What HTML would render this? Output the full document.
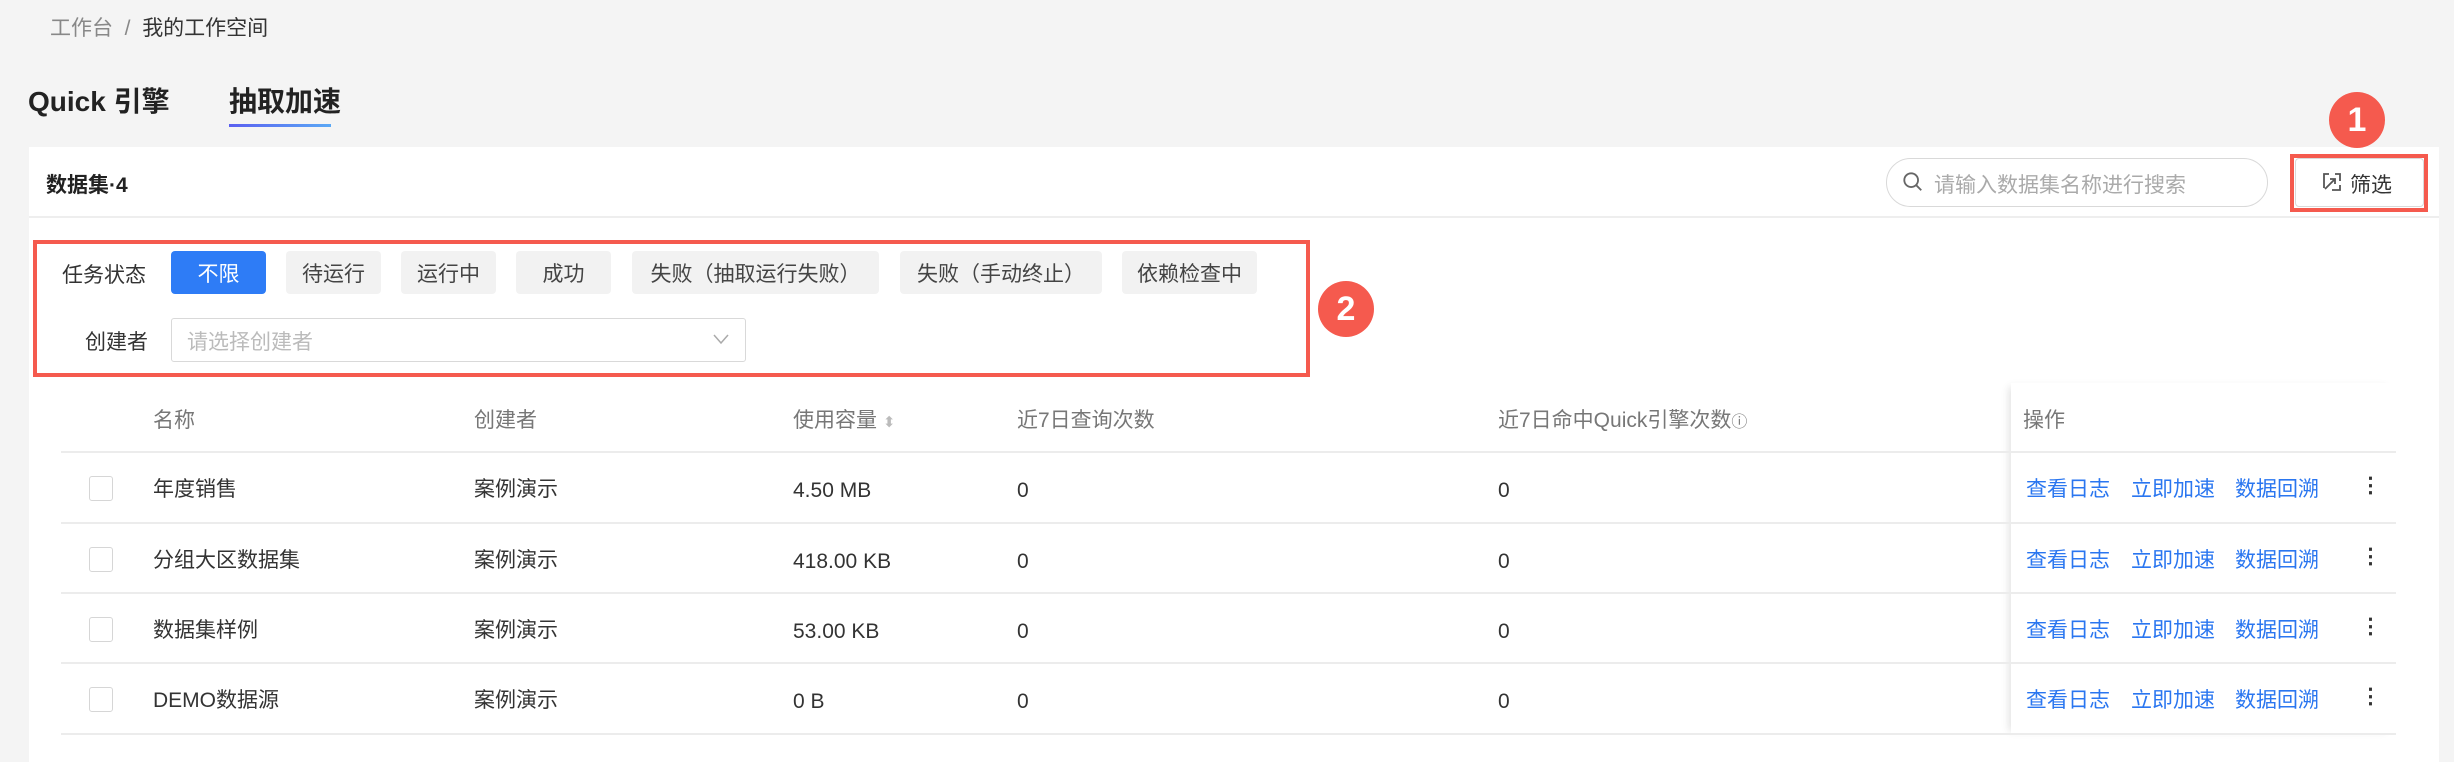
<!DOCTYPE html>
<html><head><meta charset="utf-8"><style>
*{box-sizing:border-box;margin:0;padding:0}
body{width:2454px;height:762px;background:#f4f4f4;font-family:"Liberation Sans","Noto Sans CJK SC",sans-serif;position:relative;overflow:hidden;color:#333}
.a{position:absolute;white-space:nowrap}
.chip{position:absolute;top:251px;height:43px;background:#f2f2f2;border-radius:4px;font-size:21px;color:#444;display:flex;align-items:center;justify-content:center}
.th{position:absolute;top:404px;font-size:21px;color:#777}
.td{position:absolute;font-size:21px;color:#333}
.ln{position:absolute;left:61px;width:2335px;height:2px;background:#ececec}
.lk{position:absolute;font-size:21px;color:#2a76f0}
.cb{position:absolute;left:89px;width:24px;height:25px;border:1px solid #d6d6d6;border-radius:3px;background:#fff}
.badge{position:absolute;width:56px;height:56px;border-radius:50%;background:#f55a4e;color:#fff;font-size:34px;font-weight:bold;display:flex;align-items:center;justify-content:center}
.l{margin-top:4px}
</style></head><body>
<div class="a" style="left:50px;top:12px;font-size:21px;color:#888">工作台 &nbsp;/&nbsp; <span style="color:#333">我的工作空间</span></div>
<div class="a" style="left:28px;top:80px;font-size:28px;color:#222;font-weight:bold">Quick 引擎</div>
<div class="a" style="left:229px;top:80px;font-size:28px;color:#222;font-weight:bold">抽取加速</div>
<div class="a" style="left:229px;top:124px;width:102px;height:3px;background:linear-gradient(90deg,#5a5ff0,#5aa8f5)"></div>
<div class="a" style="left:29px;top:147px;width:2410px;height:615px;background:#fff"></div>
<div class="a" style="left:46px;top:169px;font-size:21px;color:#222;font-weight:bold">数据集·4</div>
<div class="a" style="left:29px;top:216px;width:2410px;height:2px;background:#eee"></div>
<div class="a" style="left:1886px;top:158px;width:382px;height:49px;border:1px solid #d9d9d9;border-radius:25px"></div>
<svg class="a" style="left:1902px;top:171px" width="22" height="22" viewBox="0 0 24 24"><circle cx="10" cy="10" r="7.5" fill="none" stroke="#666" stroke-width="2"/><path d="M15.5 15.5L21 21" stroke="#666" stroke-width="2"/></svg>
<div class="a" style="left:1934px;top:169px;font-size:21px;color:#aaa">请输入数据集名称进行搜索</div>
<div class="a" style="left:2295px;top:158px;width:129px;height:49px;border:1px solid #d9d9d9;border-radius:4px"></div>
<svg class="a" style="left:2321px;top:171px" width="22" height="22" viewBox="0 0 22 22" fill="none" stroke="#555" stroke-width="1.8"><path d="M8 3H3v14M4 18L14 8M9 8h5v5M14 3h5v7M11 19h8v-5"/></svg>
<div class="a" style="left:2350px;top:169px;font-size:21px;color:#333">筛选</div>
<div class="a" style="left:2290px;top:154px;width:138px;height:58px;border:4px solid #f55a4e"></div>
<div class="badge" style="left:2329px;top:92px">1</div>
<div class="a" style="left:33px;top:240px;width:1277px;height:137px;border:4px solid #f55a4e"></div>
<div class="badge" style="left:1318px;top:281px">2</div>
<div class="a" style="left:62px;top:259px;font-size:21px;color:#333">任务状态</div>
<div class="chip" style="left:171px;width:95px;background:#2e7cf6;color:#fff">不限</div>
<div class="chip" style="left:286px;width:95px">待运行</div>
<div class="chip" style="left:401px;width:95px">运行中</div>
<div class="chip" style="left:516px;width:95px">成功</div>
<div class="chip" style="left:632px;width:247px">失败（抽取运行失败）</div>
<div class="chip" style="left:900px;width:202px">失败（手动终止）</div>
<div class="chip" style="left:1122px;width:135px">依赖检查中</div>
<div class="a" style="left:85px;top:326px;font-size:21px;color:#333">创建者</div>
<div class="a" style="left:171px;top:318px;width:575px;height:44px;border:1px solid #d9d9d9;border-radius:3px"></div>
<div class="a" style="left:187px;top:326px;font-size:21px;color:#bbb">请选择创建者</div>
<svg class="a" style="left:712px;top:332px" width="18" height="14" viewBox="0 0 18 14"><path d="M2 3l7 8 7-8" fill="none" stroke="#aaa" stroke-width="1.5"/></svg>
<div class="a" style="left:2011px;top:383px;width:385px;height:352px;background:#fff;box-shadow:-6px 0 8px -4px rgba(0,0,0,.12)"></div>
<div class="th" style="left:153px">名称</div>
<div class="th" style="left:474px">创建者</div>
<div class="th" style="left:793px">使用容量 <span style="font-size:15px;color:#bbb">⬍</span></div>
<div class="th" style="left:1017px">近7日查询次数</div>
<div class="th" style="left:1498px">近7日命中Quick引擎次数<span style="font-size:16px">ⓘ</span></div>
<div class="th" style="left:2023px">操作</div>
<div class="ln" style="top:451px"></div>
<div class="ln" style="top:522px"></div>
<div class="ln" style="top:592px"></div>
<div class="ln" style="top:662px"></div>
<div class="ln" style="top:733px"></div>

<div class="cb" style="top:476px"></div><div class="td" style="left:153px;top:473px">年度销售</div><div class="td" style="left:474px;top:473px">案例演示</div><div class="td l" style="left:793px;top:475px">4.50 MB</div><div class="td l" style="left:1017px;top:475px">0</div><div class="td l" style="left:1498px;top:475px">0</div>
<div class="cb" style="top:547px"></div><div class="td" style="left:153px;top:544px">分组大区数据集</div><div class="td" style="left:474px;top:544px">案例演示</div><div class="td l" style="left:793px;top:546px">418.00 KB</div><div class="td l" style="left:1017px;top:546px">0</div><div class="td l" style="left:1498px;top:546px">0</div>
<div class="cb" style="top:617px"></div><div class="td" style="left:153px;top:614px">数据集样例</div><div class="td" style="left:474px;top:614px">案例演示</div><div class="td l" style="left:793px;top:616px">53.00 KB</div><div class="td l" style="left:1017px;top:616px">0</div><div class="td l" style="left:1498px;top:616px">0</div>
<div class="cb" style="top:687px"></div><div class="td" style="left:153px;top:684px">DEMO数据源</div><div class="td" style="left:474px;top:684px">案例演示</div><div class="td l" style="left:793px;top:686px">0 B</div><div class="td l" style="left:1017px;top:686px">0</div><div class="td l" style="left:1498px;top:686px">0</div>

<div class="lk" style="left:2026px;top:473px">查看日志</div><div class="lk" style="left:2131px;top:473px">立即加速</div><div class="lk" style="left:2235px;top:473px">数据回溯</div><div class="td" style="left:2360px;top:473px;font-weight:bold">⋮</div>
<div class="lk" style="left:2026px;top:544px">查看日志</div><div class="lk" style="left:2131px;top:544px">立即加速</div><div class="lk" style="left:2235px;top:544px">数据回溯</div><div class="td" style="left:2360px;top:544px;font-weight:bold">⋮</div>
<div class="lk" style="left:2026px;top:614px">查看日志</div><div class="lk" style="left:2131px;top:614px">立即加速</div><div class="lk" style="left:2235px;top:614px">数据回溯</div><div class="td" style="left:2360px;top:614px;font-weight:bold">⋮</div>
<div class="lk" style="left:2026px;top:684px">查看日志</div><div class="lk" style="left:2131px;top:684px">立即加速</div><div class="lk" style="left:2235px;top:684px">数据回溯</div><div class="td" style="left:2360px;top:684px;font-weight:bold">⋮</div>
</body></html>
